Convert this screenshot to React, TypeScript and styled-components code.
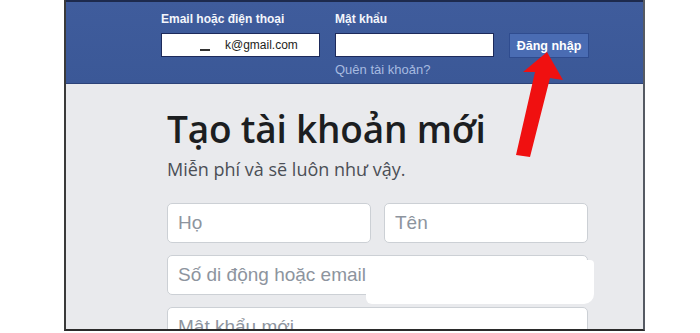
import React from 'react';
import styled, { createGlobalStyle } from 'styled-components';

const GlobalStyle = createGlobalStyle`
  html, body {
    margin: 0;
    padding: 0;
    background: #ffffff;
    overflow: hidden;
  }
`;

const Page = styled.div`
  width: 700px;
  height: 333px;
  position: relative;
  overflow: hidden;
  background: #ffffff;
`;

const Frame = styled.div`
  margin-left: 64px;
  width: 577px;
  height: 329px;
  border-left: 2px solid #3a3a3a;
  border-right: 2px solid #555a63;
  border-bottom: 2px solid #2b2b2b;
  background: #e9eaed;
  display: flex;
  flex-direction: column;
  overflow: hidden;
`;

const Header = styled.div`
  flex-shrink: 0;
  height: 84px;
  border-top: 2px solid #1d2a4d;
  background: linear-gradient(#3f5c9c, #3b5897);
  border-bottom: 1px solid #2c4278;
  padding: 10px 0 0 95px;
  box-sizing: border-box;
  display: grid;
  grid-template-columns: 159px 159px auto;
  column-gap: 15px;
  align-content: start;
  font-family: "Liberation Sans", Arial, sans-serif;
`;

const Field = styled.div`
  display: flex;
  flex-direction: column;
`;

const Label = styled.label`
  color: #f4f6fb;
  font-size: 12px;
  font-weight: bold;
  height: 21px;
  line-height: 14px;
`;

const TopInput = styled.div`
  height: 24px;
  box-sizing: border-box;
  background: #ffffff;
  border: 1px solid #1d2a5b;
  font-size: 12px;
  color: #1c1e21;
  display: flex;
  align-items: center;
  padding-left: 38px;
`;

const Redact = styled.span`
  display: inline-block;
  width: 10px;
  height: 2px;
  background: #333;
  margin: 10px 15px 0 0;
`;

const Forgot = styled.a`
  color: #a7bbe0;
  font-size: 13px;
  margin-top: 5px;
`;

const LoginButton = styled.button`
  align-self: start;
  margin-top: 21px;
  width: 80px;
  height: 25px;
  background: #4a6cb3;
  border: 1px solid #2f4c8f;
  color: #ffffff;
  font-family: "Liberation Sans", Arial, sans-serif;
  font-size: 12.5px;
  font-weight: bold;
  padding: 0;
`;

const Body = styled.div`
  padding: 19px 0 0 101px;
  font-family: "Open Sans", "Liberation Sans", sans-serif;
`;

const Title = styled.h1`
  margin: 0;
  font-size: 37px;
  font-weight: 600;
  color: #1c1e21;
  line-height: 51px;
  letter-spacing: -0.2px;
`;

const Subtitle = styled.p`
  margin: 3px 0 0 0;
  font-size: 18px;
  color: #4b4f56;
  line-height: 24px;
`;

const Form = styled.div`
  margin-top: 22px;
  width: 421px;
  display: grid;
  grid-template-columns: 1fr 1fr;
  column-gap: 13px;
  row-gap: 12px;
`;

const Box = styled.div<{ $wide?: boolean }>`
  grid-column: ${p => (p.$wide ? '1 / span 2' : 'auto')};
  height: 40px;
  box-sizing: border-box;
  background: #ffffff;
  border: 1px solid #ccd0d5;
  border-radius: 5px;
  padding-left: 10px;
  display: flex;
  align-items: center;
  font-family: "Liberation Sans", Arial, sans-serif;
  font-size: 19px;
  color: #8d949e;
  position: relative;
`;

const Blob = styled.div`
  position: absolute;
  left: 198px;
  top: 4px;
  width: 228px;
  height: 44px;
  background: #ffffff;
  border-radius: 8px 4px 10px 6px;
`;

const Arrow = styled.svg`
  position: absolute;
  left: 510px;
  top: 48px;
`;

export default function App() {
  return (
    <Page>
      <GlobalStyle />
      <Frame>
        <Header>
          <Field>
            <Label>Email hoặc điện thoại</Label>
            <TopInput>
              <Redact />k@gmail.com
            </TopInput>
          </Field>
          <Field>
            <Label>Mật khẩu</Label>
            <TopInput />
            <Forgot>Quên tài khoản?</Forgot>
          </Field>
          <LoginButton>Đăng nhập</LoginButton>
        </Header>
        <Body>
          <Title>Tạo tài khoản mới</Title>
          <Subtitle>Miễn phí và sẽ luôn như vậy.</Subtitle>
          <Form>
            <Box>Họ</Box>
            <Box>Tên</Box>
            <Box $wide>
              Số di động hoặc email
              <Blob />
            </Box>
            <Box $wide>Mật khẩu mới</Box>
          </Form>
        </Body>
      </Frame>
      <Arrow width="60" height="115" viewBox="0 0 60 115">
        <polygon points="37,4 53,32 40,30 20,109 6,107 25,24 13,24" fill="#f01010" />
      </Arrow>
    </Page>
  );
}
